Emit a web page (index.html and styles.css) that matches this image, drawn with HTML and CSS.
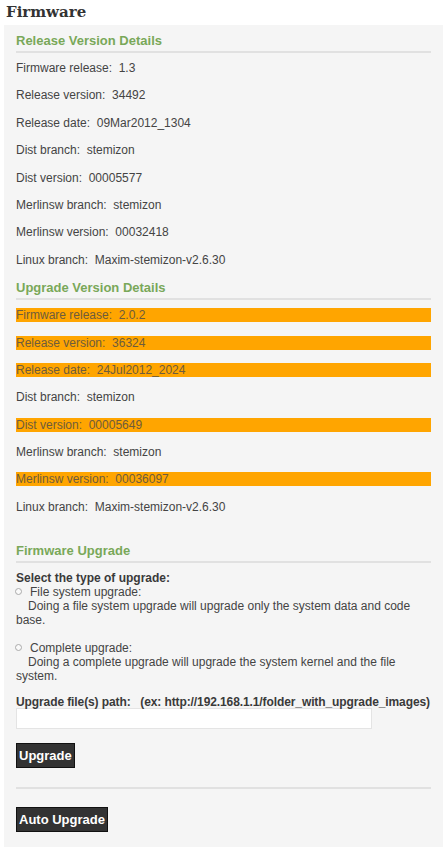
FILE: index.html
```html
<!DOCTYPE html>
<html lang="en">
<head>
  <meta charset="UTF-8"/>
  <title>Firmware</title>
  <link rel="stylesheet" href="styles.css">
</head>
<body>
  <h1 class="page-title">Firmware</h1>

  <div class="panel">
    <h2 class="section-title">Release Version Details</h2>
    <div class="row">Firmware release:&nbsp; 1.3</div>
    <div class="row">Release version:&nbsp; 34492</div>
    <div class="row">Release date:&nbsp; 09Mar2012_1304</div>
    <div class="row">Dist branch:&nbsp; stemizon</div>
    <div class="row">Dist version:&nbsp; 00005577</div>
    <div class="row">Merlinsw branch:&nbsp; stemizon</div>
    <div class="row">Merlinsw version:&nbsp; 00032418</div>
    <div class="row">Linux branch:&nbsp; Maxim-stemizon-v2.6.30</div>

    <h2 class="section-title">Upgrade Version Details</h2>
    <div class="row changed">Firmware release:&nbsp; 2.0.2</div>
    <div class="row changed">Release version:&nbsp; 36324</div>
    <div class="row changed">Release date:&nbsp; 24Jul2012_2024</div>
    <div class="row">Dist branch:&nbsp; stemizon</div>
    <div class="row changed">Dist version:&nbsp; 00005649</div>
    <div class="row">Merlinsw branch:&nbsp; stemizon</div>
    <div class="row changed">Merlinsw version:&nbsp; 00036097</div>
    <div class="row">Linux branch:&nbsp; Maxim-stemizon-v2.6.30</div>

    <h2 class="section-title spaced">Firmware Upgrade</h2>
    <form class="upgrade" onsubmit="return false">
      <div class="label">Select the type of upgrade:</div>

      <div class="option">
        <label><input type="radio" name="upgradeType" value="fs"/> File system upgrade:</label>
        <div class="desc">Doing a file system upgrade will upgrade only the system data and code base.</div>
      </div>

      <div class="option">
        <label><input type="radio" name="upgradeType" value="full"/> Complete upgrade:</label>
        <div class="desc">Doing a complete upgrade will upgrade the system kernel and the file system.</div>
      </div>

      <div class="label path-label">Upgrade file(s) path:&nbsp;&nbsp; (ex: http://192.168.1.1/folder_with_upgrade_images)</div>
      <input id="upgradePath" class="path-input" type="text"/>

      <div><button class="btn" type="button">Upgrade</button></div>
      <hr class="divider"/>
      <div><button class="btn" type="button">Auto Upgrade</button></div>
    </form>
  </div>
</body>
</html>
```

FILE: styles.css
```css
body { margin:0; padding:0 4px; background:#fff; font-family:'Liberation Sans',Arial,sans-serif; font-size:12px; color:#444; }
.page-title { margin:0; padding:3px 0 0 2px; height:22px; font-family:'DejaVu Serif',Georgia,serif; font-size:15px; line-height:18px; color:#333; }
.panel { background:#f5f5f5; padding:8px 12px 14px; min-height:800px; }
.section-title { margin:0 0 8px; padding-bottom:3px; border-bottom:2px solid #e1e1e1; font-size:13px; line-height:15px; color:#79a859; }
.section-title.spaced { margin-top:29px; }
.row { line-height:14px; margin-bottom:13.4px; }
.row.changed { background:#ffa500; color:#6e5c3c; }
.upgrade { line-height:14px; }
.label { font-weight:bold; color:#3a3a3a; }
.option { margin-bottom:14px; }
.option label { display:flex; align-items:center; gap:8px; }
.option input { appearance:none; margin:0 0 0 -1px; width:7px; height:7px; border:1px solid #aaa; border-radius:50%; background:#fafafa; }
.desc { text-indent:12px; }
.path-label { margin-top:-2px; white-space:nowrap; letter-spacing:-0.1px; }
.path-input { display:block; box-sizing:border-box; width:356px; height:21px; margin:-1px 0 14px; border:1px solid #e4e4e4; background:#fff; }
.btn { padding:0 2px; height:25px; background:#333; color:#fff; border:1px solid #111; font-family:'Liberation Sans',Arial,sans-serif; font-size:13px; font-weight:bold; cursor:pointer; }
.divider { margin:19px 0 18px; border:none; border-top:2px solid #e1e1e1; }
```
